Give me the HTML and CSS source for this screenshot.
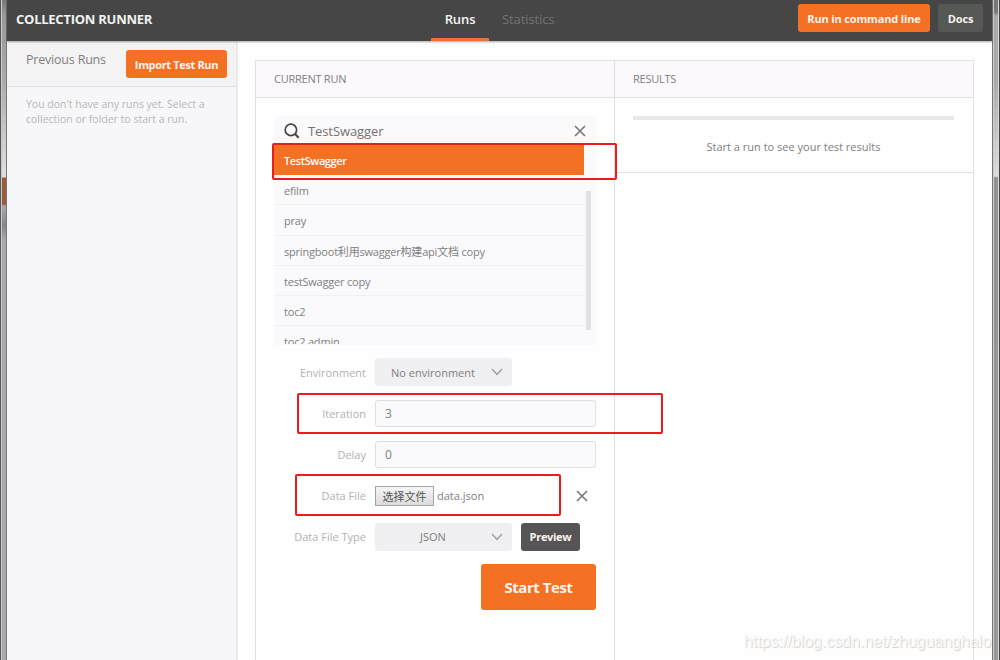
FILE: index.html
```html
<!DOCTYPE html>
<html lang="en">
<head>
    <meta charset="UTF-8">
    <meta name="viewport" content="width=device-width, initial-scale=1.0">
    <title>Collection Runner</title>
    <link rel="stylesheet" href="styles.css">
</head>
<body>
    <div class="window">
        <div class="edge edge-left"></div>
        <div class="app">
            <header class="topbar">
                <h1>COLLECTION RUNNER</h1>
                <nav class="tabs">
                    <a class="tab active">Runs</a>
                    <a class="tab">Statistics</a>
                </nav>
                <div class="actions">
                    <button class="btn btn-cli">Run in command line</button>
                    <button class="btn btn-docs">Docs</button>
                </div>
            </header>

            <div class="content">
                <aside class="sidebar">
                    <div class="sidebar-head">
                        <span class="sidebar-title">Previous Runs</span>
                        <button class="btn btn-import">Import Test Run</button>
                    </div>
                    <p class="empty">You don't have any runs yet. Select a<br>collection or folder to start a run.</p>
                </aside>

                <main class="panels">
                    <section class="panel current">
                        <h2>CURRENT RUN</h2>
                        <div class="panel-body">
                            <div class="picker">
                                <div class="search">
                                    <svg class="icon-search" width="16" height="16" viewBox="0 0 16 16" fill="none" stroke="#484848">
                                        <circle cx="6.9" cy="6.9" r="5.7" stroke-width="1.7"/>
                                        <path d="M11 11l3.7 3.7" stroke-width="2.2"/>
                                    </svg>
                                    <span class="search-text">TestSwagger</span>
                                    <svg class="icon-close" width="12" height="12" viewBox="0 0 12 12" fill="none" stroke="#777" stroke-width="1.6">
                                        <path d="M1 1l10 10M11 1L1 11"/>
                                    </svg>
                                </div>
                                <ul class="list">
                                    <li class="selected">TestSwagger</li>
                                    <li>efilm</li>
                                    <li>pray</li>
                                    <li>springboot利用swagger构建api文档 copy</li>
                                    <li>testSwagger copy</li>
                                    <li>toc2</li>
                                    <li>toc2 admin</li>
                                </ul>
                                <div class="scrollbar"></div>
                                <div class="mark mark-collection"></div>
                            </div>

                            <div class="form">
                                <div class="row">
                                    <label>Environment</label>
                                    <div class="select">
                                        <span>No environment</span>
                                        <svg width="12" height="8" viewBox="0 0 12 8" fill="none" stroke="#a3a1a3" stroke-width="1.5"><path d="M1 1l5 5.3L11 1"/></svg>
                                    </div>
                                </div>
                                <div class="row">
                                    <label>Iteration</label>
                                    <div class="field">3</div>
                                    <div class="mark mark-iteration"></div>
                                </div>
                                <div class="row">
                                    <label>Delay</label>
                                    <div class="field">0</div>
                                </div>
                                <div class="row">
                                    <label>Data File</label>
                                    <button class="file-btn">选择文件</button>
                                    <span class="file-name">data.json</span>
                                    <svg class="file-clear" width="12" height="12" viewBox="0 0 12 12" fill="none" stroke="#777" stroke-width="1.6">
                                        <path d="M1 1l10 10M11 1L1 11"/>
                                    </svg>
                                    <div class="mark mark-file"></div>
                                </div>
                                <div class="row">
                                    <label>Data File Type</label>
                                    <div class="select">
                                        <span>JSON</span>
                                        <svg width="12" height="8" viewBox="0 0 12 8" fill="none" stroke="#a3a1a3" stroke-width="1.5"><path d="M1 1l5 5.3L11 1"/></svg>
                                    </div>
                                    <button class="btn btn-preview">Preview</button>
                                </div>
                                <button class="btn btn-start">Start Test</button>
                            </div>
                        </div>
                    </section>

                    <section class="panel results">
                        <h2>RESULTS</h2>
                        <div class="results-body">
                            <div class="progress"></div>
                            <p>Start a run to see your test results</p>
                        </div>
                    </section>
                </main>
            </div>
        </div>
        <div class="edge edge-right"></div>
        <div class="watermark">https://blog.csdn.net/zhuguanghalo</div>
    </div>
</body>
</html>
```
FILE: styles.css
```css
* {
    box-sizing: border-box;
}
body {
    margin: 0;
    font-family: "Open Sans", "Noto Sans CJK SC", sans-serif;
    font-size: 11px;
    color: #808080;
    background-color: #fefefe;
}
h1, h2, p, ul {
    margin: 0;
    padding: 0;
    font-weight: normal;
}
.window {
    display: flex;
    position: relative;
    width: 1000px;
    height: 660px;
    overflow: hidden;
}

/* window frame */
.edge {
    width: 7px;
    flex: none;
}
.edge-left {
    background: linear-gradient(to right, #555 0 1px, #ccc 1px 2px, transparent 2px 6px, #777 6px 7px),
        linear-gradient(#777 0, #999 14px, #aaa 80px, #ddd 170px, #ddd 177px, #9c5a3c 178px, #9c5a3c 204px, #a9a9ad 206px, #85858a 225px, #a8a8ac 240px, #a8a8ac 100%);
}
.edge-right {
    width: 8px;
    background: linear-gradient(to right, #777 0 1px, #ccc 1px 2px, transparent 2px 6px, #ddd 6px 7px, #444 7px),
        linear-gradient(#777 0, #777 12px, #aaa 16px, #aaa 80px, #ddd 176px, #929292 178px, #999 100%);
}

.app {
    flex: 1;
    display: flex;
    flex-direction: column;
}
.topbar {
    display: flex;
    align-items: center;
    height: 41px;
    padding: 0 9px;
    background-color: #464646;
    box-shadow: 0 1px 2px rgba(0, 0, 0, 0.35);
    z-index: 1;
}
.topbar h1 {
    width: 415px;
    padding-bottom: 3px;
    font-size: 13px;
    font-weight: 700;
    letter-spacing: -0.25px;
    color: #f2f2f2;
    white-space: nowrap;
}
.tabs {
    display: flex;
    flex: 1;
    height: 41px;
}
.tab {
    padding: 0 13px;
    line-height: 38px;
    font-size: 13px;
    letter-spacing: -0.1px;
    color: #737373;
}
.tab.active {
    width: 58px;
    text-align: center;
    font-weight: 600;
    color: #f5f5f5;
    border-bottom: 3px solid #ec6f38;
}
.actions {
    display: flex;
    gap: 8px;
    padding-bottom: 5px;
}
.btn {
    flex: none;
    height: 28px;
    padding: 0;
    border: none;
    border-radius: 3px;
    font-family: inherit;
    font-size: 11px;
    font-weight: 700;
    letter-spacing: -0.15px;
    color: #fbf3ee;
    background-color: #f47023;
    white-space: nowrap;
}
.btn-cli {
    width: 132px;
}
.btn-docs {
    width: 45px;
    background-color: #565856;
}

.content {
    display: flex;
    flex: 1;
}
.sidebar {
    width: 231px;
    background-color: #f7f6f8;
    border-right: 2px solid #ebeaeb;
}
.sidebar-head {
    display: flex;
    justify-content: space-between;
    height: 46px;
    padding: 9px 9px 0 19px;
    background-color: #f4f3f4;
    border-bottom: 1px solid #e0dfe0;
}
.sidebar-title {
    font-size: 12.5px;
    line-height: 19px;
    letter-spacing: -0.2px;
}
.btn-import {
    width: 101px;
    height: 28px;
    letter-spacing: -0.35px;
}
.empty {
    padding: 10px 0 0 19px;
    font-size: 10.5px;
    line-height: 14.5px;
    color: #b7b6b7;
    white-space: nowrap;
}

.panels {
    display: flex;
    flex: 1;
    padding: 19px 18px 0 17px;
}
.panel {
    border-top: 1px solid #e3e2e3;
    border-left: 1px solid #e0dfe0;
}
.panel h2 {
    height: 37px;
    padding-left: 18px;
    line-height: 36px;
    font-size: 11px;
    letter-spacing: -0.25px;
    background-color: #fbf9fb;
    border-bottom: 1px solid #e0dfe0;
}
.current {
    width: 359px;
}
.results {
    flex: 1;
    border-right: 1px solid #e3e2e3;
}
.results-body {
    height: 75px;
    padding: 18px 19px 0 18px;
    border-bottom: 1px solid #e3e2e3;
    text-align: center;
}
.progress {
    height: 4px;
    margin-bottom: 19px;
    background-color: #e8e8e8;
}

.panel-body {
    padding: 18px 18px 0;
}
.picker {
    position: relative;
    height: 229px;
    background-color: #faf9fb;
    border-radius: 4px 4px 0 0;
}
.search {
    display: flex;
    align-items: center;
    height: 29px;
    padding: 0 10px;
}
.search-text {
    flex: 1;
    padding-left: 8px;
    font-size: 13px;
    letter-spacing: -0.1px;
    color: #727272;
}
.list {
    width: 310px;
    height: 199px;
    overflow: hidden;
    list-style: none;
    letter-spacing: -0.2px;
}
.list li {
    height: 30.2px;
    padding-left: 10px;
    line-height: 32px;
    border-bottom: 1px solid #f1eff2;
}
.list .selected {
    font-weight: 600;
    letter-spacing: -0.4px;
    color: #fff;
    background-color: #f47023;
    border-bottom: none;
}
.scrollbar {
    position: absolute;
    left: 312px;
    top: 75px;
    width: 5px;
    height: 139px;
    background-color: #e2e0e3;
}

/* red highlight frames */
.mark {
    position: absolute;
    border: 2px solid #e91d1d;
    border-radius: 2px;
}
.mark-collection {
    left: -2px;
    top: 27px;
    width: 345px;
    height: 37px;
}
.mark-iteration {
    left: 23px;
    top: -6px;
    width: 366px;
    height: 41px;
}
.mark-file {
    left: 21px;
    top: -8px;
    width: 266px;
    height: 42px;
}

.form {
    display: flex;
    flex-direction: column;
    padding-top: 13px;
}
.row {
    display: flex;
    align-items: center;
    position: relative;
    height: 28px;
    margin-bottom: 13.2px;
}
.row label {
    width: 92px;
    margin-right: 9px;
    text-align: right;
    color: #b2b1b2;
}
.select {
    display: flex;
    align-items: center;
    width: 137px;
    height: 28px;
    padding-right: 9px;
    background-color: #f0eff1;
    border-radius: 3px;
}
.select span {
    flex: 1;
    padding-left: 0;
    text-align: center;
}
.field {
    width: 221px;
    height: 27px;
    padding-left: 9px;
    line-height: 26px;
    font-size: 12px;
    background-color: #faf9fb;
    border: 1px solid #dfdde0;
    border-radius: 3px;
}
.file-btn {
    width: 59px;
    height: 20px;
    padding: 0;
    font-family: "Noto Sans CJK SC", sans-serif;
    font-size: 11px;
    line-height: 16px;
    color: #555;
    background: linear-gradient(#f5f5f5, #dcdcdc);
    border: 1px solid #a5a5a5;
    border-radius: 0;
}
.file-name {
    flex: 1;
    padding-left: 3px;
}
.file-clear {
    margin-right: 8px;
}
.btn-preview {
    width: 59px;
    margin-left: 9px;
    background-color: #565457;
    letter-spacing: -0.3px;
}
.btn-start {
    align-self: flex-end;
    width: 115px;
    height: 46px;
    font-size: 15px;
    letter-spacing: -0.45px;
}

.watermark {
    position: absolute;
    right: 9px;
    bottom: 9px;
    font-family: "Liberation Sans", Arial, sans-serif;
    font-size: 16px;
    letter-spacing: -0.03px;
    color: #f8f8f8;
    text-shadow: 1px 1px 1px rgba(0, 0, 0, 0.18);
}
```
